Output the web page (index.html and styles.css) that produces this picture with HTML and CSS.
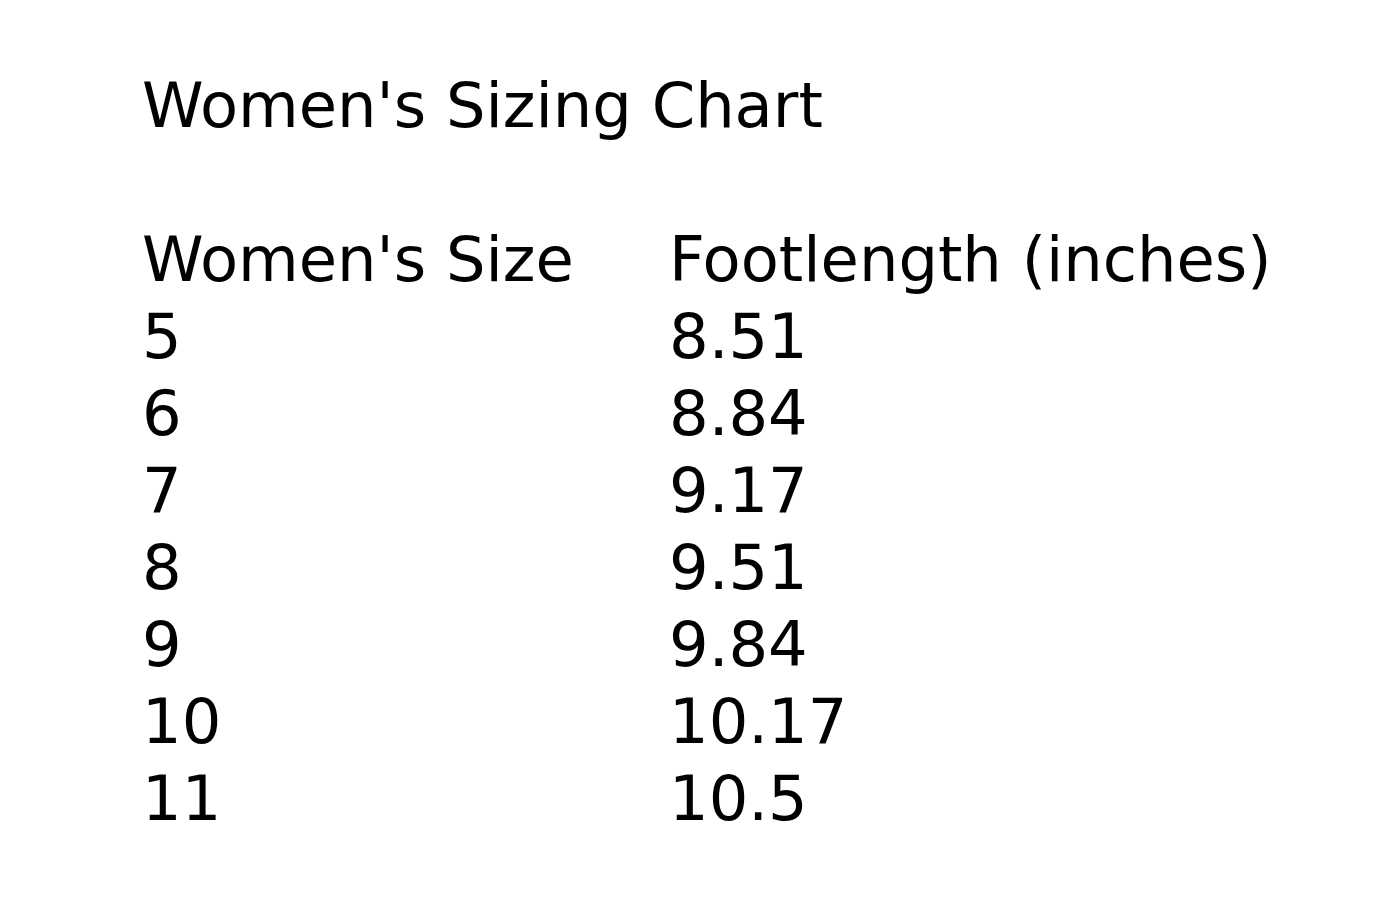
FILE: index.html
```html
<!DOCTYPE html>
<html lang="en">
<head>
<meta charset="utf-8">
<title>Women's Sizing Chart</title>
<link rel="stylesheet" href="styles.css">
</head>
<body>
<main class="chart">
  <h1 class="chart-title">Women's Sizing Chart</h1>
  <div class="chart-table">
    <div class="cell head">Women's Size</div><div class="cell head">Footlength (inches)</div>
    <div class="cell">5</div><div class="cell">8.51</div>
    <div class="cell">6</div><div class="cell">8.84</div>
    <div class="cell">7</div><div class="cell">9.17</div>
    <div class="cell">8</div><div class="cell">9.51</div>
    <div class="cell">9</div><div class="cell">9.84</div>
    <div class="cell">10</div><div class="cell">10.17</div>
    <div class="cell">11</div><div class="cell">10.5</div>
  </div>
</main>
</body>
</html>
```
FILE: styles.css
```css
html, body {
  margin: 0;
  padding: 0;
  background: #ffffff;
}
body {
  width: 1400px;
  height: 900px;
  overflow: hidden;
  font-family: "DejaVu Sans", Verdana, sans-serif;
  color: #000000;
}
.chart {
  padding: 67px 0 0 142px;
}
.chart-title {
  margin: 0 0 77px 0;
  font-size: 62.3px;
  font-weight: normal;
  line-height: 77px;
}
.chart-table {
  display: grid;
  grid-template-columns: 527px auto;
}
.cell {
  font-size: 62.3px;
  line-height: 77px;
  white-space: nowrap;
}
```
